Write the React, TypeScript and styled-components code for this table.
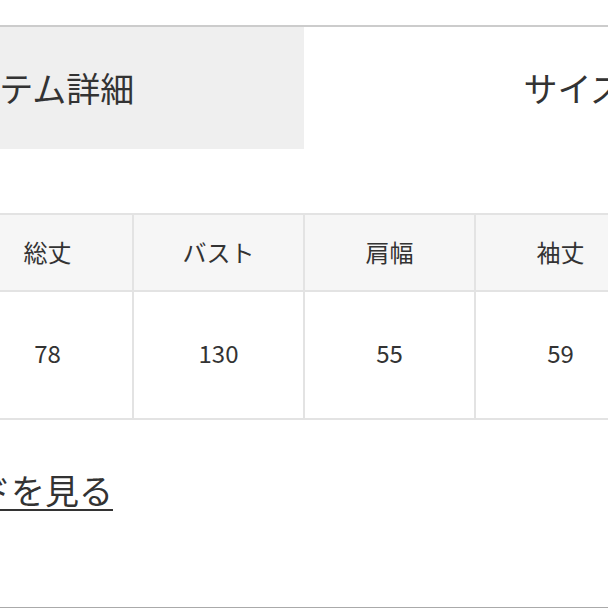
import React from "react";
import styled, { createGlobalStyle } from "styled-components";

const Global = createGlobalStyle`
  html, body { margin: 0; padding: 0; background: #ffffff; }
  body { font-family: "Noto Sans CJK JP", "Noto Sans", sans-serif; color: #333333; }
`;

const Page = styled.div`
  width: 608px;
  height: 608px;
  box-sizing: border-box;
  overflow: hidden;
  padding-top: 25px;
  border-bottom: 1px solid #aaaaaa;
`;

const Tabs = styled.div`
  display: flex;
  width: 1080px;
  margin-left: -236px;
  border-top: 2px solid #cccccc;
`;

const Tab = styled.div<{ $active?: boolean }>`
  flex: 0 0 540px;
  height: 122px;
  display: flex;
  align-items: center;
  justify-content: center;
  padding-bottom: 2px;
  box-sizing: border-box;
  font-size: 34px;
  color: #333333;
  background: ${(p) => (p.$active ? "#efefef" : "#ffffff")};
`;

const SizeTable = styled.table<{ $cols: number }>`
  margin-top: 64px;
  margin-left: -39px;
  width: ${(p) => p.$cols * 169}px;
  min-width: ${(p) => p.$cols * 169}px;
  border-collapse: collapse;
  table-layout: fixed;
`;

const HeadCell = styled.th`
  width: 169px;
  height: 73px;
  padding: 0 0 2px;
  border: 2px solid #e3e3e3;
  background: #f6f6f6;
  font-weight: 400;
  font-size: 24px;
  color: #333333;
  text-align: center;
`;

const BodyCell = styled.td`
  height: 121px;
  padding: 0 0 5px;
  border: 2px solid #e3e3e3;
  background: #ffffff;
  font-size: 24px;
  color: #333333;
  text-align: center;
`;

const GuideLink = styled.a`
  display: inline-block;
  margin-top: 47px;
  margin-left: -192px;
  font-size: 34px;
  line-height: 46px;
  color: #333333;
  text-decoration: underline;
  text-decoration-thickness: 2px;
  text-underline-offset: 5px;
  white-space: nowrap;
`;

const heads = ["総丈", "バスト", "肩幅", "袖丈", "裄丈"];
const values = ["78", "130", "55", "59", "-"];

export default function App() {
  return (
    <>
      <Global />
      <Page>
        <Tabs>
          <Tab $active>アイテム詳細</Tab>
          <Tab>サイズ</Tab>
        </Tabs>
        <SizeTable $cols={heads.length}>
          <thead>
            <tr>
              {heads.map((h) => (
                <HeadCell key={h}>{h}</HeadCell>
              ))}
            </tr>
          </thead>
          <tbody>
            <tr>
              {values.map((v, i) => (
                <BodyCell key={i}>{v}</BodyCell>
              ))}
            </tr>
          </tbody>
        </SizeTable>
        <div>
          <GuideLink>サイズガイドを見る</GuideLink>
        </div>
      </Page>
    </>
  );
}
